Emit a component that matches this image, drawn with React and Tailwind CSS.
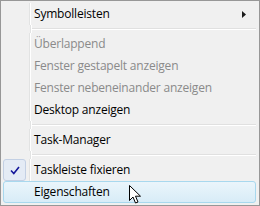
import React from "react";

const items = [
  { type: "item", label: "Symbolleisten", submenu: true },
  { type: "sep" },
  { type: "item", label: "Überlappend", disabled: true },
  { type: "item", label: "Fenster gestapelt anzeigen", disabled: true },
  { type: "item", label: "Fenster nebeneinander anzeigen", disabled: true },
  { type: "item", label: "Desktop anzeigen" },
  { type: "sep" },
  { type: "item", label: "Task-Manager" },
  { type: "sep" },
  { type: "item", label: "Taskleiste fixieren", checked: true },
  { type: "item", label: "Eigenschaften", hover: true },
];

const Separator = () => (
  <div className="flex h-[8px]">
    <div className="w-[27px] shrink-0" />
    <div className="w-[1px] bg-[#e2e3e3]" />
    <div className="w-[1px] bg-white" />
    <div className="flex-1 flex flex-col justify-center">
      <div className="h-[1px] bg-[#e0e0e0]" />
      <div className="h-[1px] bg-white" />
    </div>
  </div>
);

const MenuItem = ({ item }) => {
  const textColor = item.disabled ? "text-[#8a8a8a]" : "text-black";
  return (
    <div
      className={`flex h-[22px] items-center rounded-[3px] border ${
        item.hover
          ? "border-[#a8d8ee] bg-gradient-to-b from-[#eaf5fb] to-[#d8ecf7]"
          : "border-transparent"
      }`}
    >
      <div className="w-[26px] h-full shrink-0 flex items-center -ml-[1px]">
        {item.checked && (
          <div className="w-[23px] h-[22px] rounded-[3px] border border-[#c3d0e4] bg-[#e4ebf5] flex items-center justify-center">
            <svg width="10" height="9" viewBox="0 0 10 9">
              <path
                d="M1 4.5 L3.8 7.5 L9 1"
                fill="none"
                stroke="#15179a"
                strokeWidth="1.6"
              />
            </svg>
          </div>
        )}
      </div>
      <div
        className={`w-[1px] h-[22px] ${item.hover ? "" : "bg-[#e2e3e3]"}`}
      />
      <div className={`w-[1px] h-[22px] ${item.hover ? "" : "bg-white"}`} />
      <span
        className={`flex-1 pl-[3px] text-[12px] tracking-[-0.2px] ${textColor} leading-none`}
        style={{ fontFamily: '"Open Sans", "Noto Sans", sans-serif' }}
      >
        {item.label}
      </span>
      {item.submenu && (
        <svg width="4" height="7" viewBox="0 0 4 7" className="mr-[9px]">
          <path d="M0 0 L4 3.5 L0 7 Z" fill="#1a1a1a" />
        </svg>
      )}
    </div>
  );
};

export default function App() {
  return (
    <div className="relative w-[260px] h-[206px] border border-[#979797] bg-[#f0f0f0] pt-[2px] pb-[2px] pl-[2px] pr-[3px] overflow-hidden">
      {items.map((item, i) =>
        item.type === "sep" ? (
          <Separator key={i} />
        ) : (
          <MenuItem key={i} item={item} />
        )
      )}
      {/* mouse cursor */}
      <svg
        width="13"
        height="20"
        viewBox="0 0 13 20"
        className="absolute left-[128px] top-[184px]"
      >
        <path
          d="M0.5 0.5 L0.5 15.5 L4 12 L6.5 18 L9 17 L6.5 11.2 L11.5 11.2 Z"
          fill="white"
          stroke="black"
          strokeWidth="1"
          strokeLinejoin="miter"
        />
      </svg>
    </div>
  );
}
